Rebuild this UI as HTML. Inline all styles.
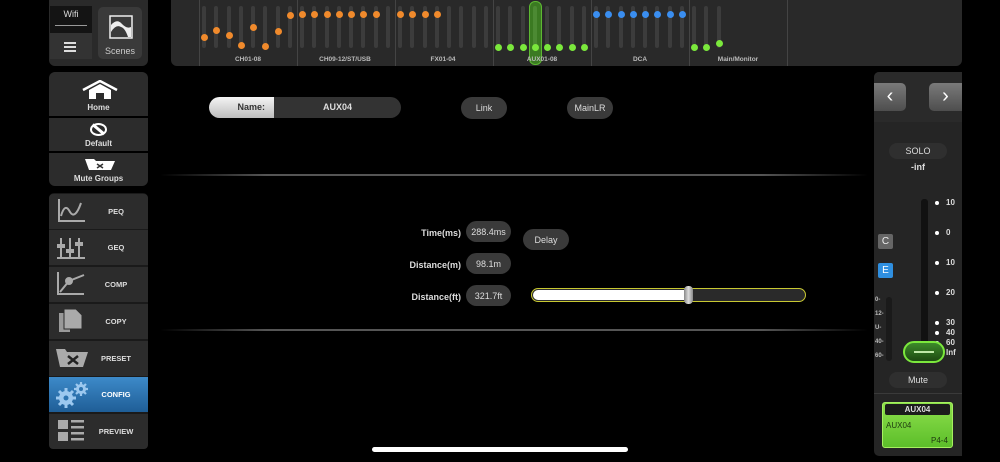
<!DOCTYPE html><html><head><style>
*{margin:0;padding:0;box-sizing:border-box}
body{width:1000px;height:462px;background:#000;position:relative;overflow:hidden;font-family:"Liberation Sans",sans-serif;color:#ddd}
.a{position:absolute}
.t{position:absolute;top:6px;width:4px;height:42px;background:#3c3c3c;border-radius:2px;margin-left:-2px}
.d{position:absolute;width:7px;height:7px;border-radius:50%;margin-left:-3.5px;margin-top:-3.5px}
.o{background:#f08a2c}.g{background:#7be83c}.b{background:#3a8ef0}
.sep{position:absolute;top:0;width:1px;height:66px;background:#444}
.lbl{position:absolute;top:56px;font-size:6.5px;font-weight:bold;color:#bbb;transform:translateX(-50%);white-space:nowrap}
.btn{position:absolute;left:49px;width:99px;background:#2c2c2c;color:#eee;font-weight:bold}
.mi{position:absolute;left:116px;font-size:7.5px;font-weight:bold;color:#ddd;transform:translateX(-50%)}
.pill{position:absolute;background:#3a3a3a;border-radius:12px;font-size:9px;color:#ddd;text-align:center}
.lab{position:absolute;font-size:9px;font-weight:bold;color:#ddd;text-align:right;width:80px}
.sc{position:absolute;left:935px;font-size:8px;font-weight:bold;color:#ddd}
.sc i{display:inline-block;width:4px;height:4px;background:#fff;border-radius:50%;margin-right:7px;vertical-align:middle}
.ml{position:absolute;left:875px;font-size:6px;font-weight:bold;color:#bbb}
</style></head><body>
<div class="a" style="left:171px;top:0;width:791px;height:66px;background:#292929;border-radius:0 0 6px 6px"></div>
<div class="sep" style="left:199px"></div><div class="sep" style="left:297px"></div><div class="sep" style="left:395px"></div><div class="sep" style="left:493px"></div><div class="sep" style="left:591px"></div><div class="sep" style="left:689px"></div><div class="sep" style="left:787px"></div>
<div class="a" style="left:529px;top:1px;width:13px;height:64px;border-radius:6px;background:#3b7a22;border:1px solid #5db832"></div>
<div class="t" style="left:204px"></div><div class="t" style="left:216px"></div><div class="t" style="left:229px"></div><div class="t" style="left:241px"></div><div class="t" style="left:253px"></div><div class="t" style="left:265px"></div><div class="t" style="left:278px"></div><div class="t" style="left:290px"></div>
<div class="t" style="left:302px"></div><div class="t" style="left:314px"></div><div class="t" style="left:327px"></div><div class="t" style="left:339px"></div><div class="t" style="left:351px"></div><div class="t" style="left:363px"></div><div class="t" style="left:376px"></div><div class="t" style="left:388px"></div>
<div class="t" style="left:400px"></div><div class="t" style="left:412px"></div><div class="t" style="left:425px"></div><div class="t" style="left:437px"></div><div class="t" style="left:449px"></div><div class="t" style="left:461px"></div><div class="t" style="left:474px"></div><div class="t" style="left:486px"></div>
<div class="t" style="left:498px"></div><div class="t" style="left:510px"></div><div class="t" style="left:523px"></div><div class="t" style="left:535px;background:#4c8a33"></div><div class="t" style="left:547px"></div><div class="t" style="left:559px"></div><div class="t" style="left:572px"></div><div class="t" style="left:584px"></div>
<div class="t" style="left:596px"></div><div class="t" style="left:608px"></div><div class="t" style="left:621px"></div><div class="t" style="left:633px"></div><div class="t" style="left:645px"></div><div class="t" style="left:657px"></div><div class="t" style="left:670px"></div><div class="t" style="left:682px"></div>
<div class="t" style="left:694px"></div><div class="t" style="left:706px"></div><div class="t" style="left:719px"></div>
<div class="d o" style="left:204px;top:37px"></div><div class="d o" style="left:216px;top:30px"></div><div class="d o" style="left:229px;top:35px"></div><div class="d o" style="left:241px;top:45px"></div><div class="d o" style="left:253px;top:27px"></div><div class="d o" style="left:265px;top:46px"></div><div class="d o" style="left:278px;top:31px"></div><div class="d o" style="left:290px;top:15px"></div>
<div class="d o" style="left:302px;top:14px"></div><div class="d o" style="left:314px;top:14px"></div><div class="d o" style="left:327px;top:14px"></div><div class="d o" style="left:339px;top:14px"></div><div class="d o" style="left:351px;top:14px"></div><div class="d o" style="left:363px;top:14px"></div><div class="d o" style="left:376px;top:14px"></div>
<div class="d o" style="left:400px;top:14px"></div><div class="d o" style="left:412px;top:14px"></div><div class="d o" style="left:425px;top:14px"></div><div class="d o" style="left:437px;top:14px"></div>
<div class="d g" style="left:498px;top:47px"></div><div class="d g" style="left:510px;top:47px"></div><div class="d g" style="left:523px;top:47px"></div><div class="d g" style="left:535px;top:47px"></div><div class="d g" style="left:547px;top:47px"></div><div class="d g" style="left:559px;top:47px"></div><div class="d g" style="left:572px;top:47px"></div><div class="d g" style="left:584px;top:47px"></div>
<div class="d b" style="left:596px;top:14px"></div><div class="d b" style="left:608px;top:14px"></div><div class="d b" style="left:621px;top:14px"></div><div class="d b" style="left:633px;top:14px"></div><div class="d b" style="left:645px;top:14px"></div><div class="d b" style="left:657px;top:14px"></div><div class="d b" style="left:670px;top:14px"></div><div class="d b" style="left:682px;top:14px"></div>
<div class="d g" style="left:694px;top:47px"></div><div class="d g" style="left:706px;top:47px"></div><div class="d g" style="left:719px;top:43px"></div>
<div class="lbl" style="left:248px">CH01-08</div><div class="lbl" style="left:345px">CH09-12/ST/USB</div><div class="lbl" style="left:443px">FX01-04</div><div class="lbl" style="left:542px">AUX01-08</div><div class="lbl" style="left:640px">DCA</div><div class="lbl" style="left:738px">Main/Monitor</div>

<div class="a" style="left:49px;top:0;width:99px;height:66px;background:#2a2a2a;border-radius:0 0 6px 6px"></div>
<div class="a" style="left:50px;top:6px;width:42px;height:27px;background:#141414"></div>
<div class="a" style="left:50px;top:9px;width:42px;text-align:center;font-size:9px;color:#ddd">Wifi</div>
<div class="a" style="left:55px;top:25px;width:32px;height:1px;background:#999"></div>
<div class="a" style="left:50px;top:33px;width:42px;height:26px;background:#333"></div>
<div class="a" style="left:64px;top:42px;width:12px;height:1.5px;background:#ddd;box-shadow:0 4px 0 #ddd,0 8px 0 #ddd"></div>
<div class="a" style="left:98px;top:7px;width:44px;height:52px;background:#3a3a3a;border-radius:5px"></div>
<svg class="a" style="left:109px;top:15px" width="24" height="24"><rect x="1" y="1" width="22" height="22" fill="none" stroke="#eee" stroke-width="1.5"/><path d="M2 10 Q8 3 13 9 Q18 14 22 12 L22 22 L19 22 Q16 13 12 12 Q7 9 2 17Z" fill="#eee"/></svg>
<div class="a" style="left:98px;top:46px;width:44px;text-align:center;font-size:9px;color:#ccc">Scenes</div>

<div class="btn" style="top:72px;height:44px;border-radius:6px 6px 0 0"></div>
<svg class="a" style="left:81px;top:80px" width="38" height="20"><path d="M2 10 L19 1 L36 10" fill="none" stroke="#fff" stroke-width="2.5"/><path d="M8 10 L19 4 L30 10 L30 19 L23 19 L23 13 L15 13 L15 19 L8 19Z" fill="#fff"/></svg>
<div class="a" style="left:49px;top:103px;width:99px;text-align:center;font-size:8px;font-weight:bold">Home</div>
<div class="btn" style="top:118px;height:33px"></div>
<div class="a" style="left:90px;top:123px;width:17px;height:13px;border:2.5px solid #fff;border-radius:50%"></div>
<div class="a" style="left:97px;top:122px;width:2.5px;height:15px;background:#fff;transform:rotate(-50deg)"></div>
<div class="a" style="left:49px;top:139px;width:99px;text-align:center;font-size:8px;font-weight:bold">Default</div>
<div class="btn" style="top:153px;height:33px;border-radius:0 0 6px 6px"></div>
<svg class="a" style="left:84px;top:158px" width="32" height="13"><path d="M1 1 L10 1 L12 3 L31 3 L27 12 L5 12Z" fill="#fff"/><path d="M13 6 L19 10 M19 6 L13 10" stroke="#333" stroke-width="1.5"/></svg>
<div class="a" style="left:49px;top:174px;width:99px;text-align:center;font-size:8px;font-weight:bold">Mute Groups</div>

<div class="a" style="left:49px;top:193px;width:99px;height:256px;background:#1a1a1a;border-radius:5px"></div>
<div class="btn" style="top:194px;height:35px;border-radius:4px 4px 0 0"></div>
<div class="btn" style="top:230px;height:35px"></div>
<div class="btn" style="top:267px;height:35px"></div>
<div class="btn" style="top:304px;height:35px"></div>
<div class="btn" style="top:341px;height:35px"></div>
<div class="btn" style="top:377px;height:35px;background:linear-gradient(#3d8ac9,#1f5e97)"></div>
<div class="btn" style="top:414px;height:35px;border-radius:0 0 4px 4px"></div>
<svg class="a" style="left:57px;top:198px" width="30" height="26" fill="none" stroke="#aaa" stroke-width="2"><path d="M2 1 V23 H28"/><path d="M4 18 Q8 4 13 14 Q18 22 24 5"/></svg>
<svg class="a" style="left:56px;top:236px" width="30" height="24" fill="#aaa"><rect x="4" y="2" width="2" height="20"/><rect x="13" y="2" width="2" height="20"/><rect x="22" y="2" width="2" height="20"/><rect x="1" y="8" width="8" height="4"/><rect x="10" y="13" width="8" height="4"/><rect x="19" y="6" width="8" height="4"/><rect x="1" y="21" width="28" height="2"/></svg>
<svg class="a" style="left:56px;top:271px" width="30" height="26" fill="none" stroke="#aaa" stroke-width="2"><path d="M2 1 V23 H28"/><path d="M4 21 L13 10 L28 4"/><circle cx="13" cy="10" r="3" fill="#aaa"/></svg>
<svg class="a" style="left:58px;top:308px" width="28" height="26" fill="#999"><path d="M1 5 H12 V24 H1Z"/><path d="M6 1 H18 L24 7 V21 H6Z" fill="#aaa" stroke="#2c2c2c"/></svg>
<svg class="a" style="left:55px;top:348px" width="34" height="20"><path d="M1 1 H10 L12 4 H33 L28 19 H5Z" fill="#aaa"/><path d="M13 8 L23 16 M23 8 L13 16" stroke="#222" stroke-width="2.5"/></svg>
<svg class="a" style="left:54px;top:381px" width="36" height="28" fill="#9cc8ef"><circle cx="12" cy="17" r="7"/><g stroke="#9cc8ef" stroke-width="3"><path d="M12 7 V27 M2 17 H22 M5 10 L19 24 M19 10 L5 24"/></g><circle cx="12" cy="17" r="2.5" fill="#2d74b0"/><circle cx="27" cy="8" r="5"/><g stroke="#9cc8ef" stroke-width="2.2"><path d="M27 1 V15 M20 8 H34 M22 3 L32 13 M32 3 L22 13"/></g><circle cx="27" cy="8" r="2" fill="#2d74b0"/></svg>
<svg class="a" style="left:57px;top:419px" width="28" height="24" fill="#aaa"><rect x="1" y="1" width="10" height="9"/><rect x="1" y="13" width="10" height="9"/><rect x="14" y="1" width="13" height="2.5"/><rect x="14" y="7" width="13" height="2.5"/><rect x="14" y="13" width="13" height="2.5"/><rect x="14" y="19" width="13" height="2.5"/></svg>
<div class="mi" style="top:207px">PEQ</div><div class="mi" style="top:243px">GEQ</div><div class="mi" style="top:280px">COMP</div><div class="mi" style="top:317px">COPY</div><div class="mi" style="top:354px">PRESET</div><div class="mi" style="top:390px;color:#fff">CONFIG</div><div class="mi" style="top:427px">PREVIEW</div>

<div class="a" style="left:209px;top:97px;width:65px;height:21px;background:linear-gradient(#f4f4f4,#bdbdbd);border-radius:11px 0 0 11px;font-size:9px;font-weight:bold;color:#333;text-align:right;padding:5px 9px 0 0">Name:</div>
<div class="a" style="left:274px;top:97px;width:127px;height:21px;background:#333;border-radius:0 11px 11px 0;font-size:9px;font-weight:bold;text-align:center;padding-top:5px">AUX04</div>
<div class="pill" style="left:461px;top:97px;width:46px;height:22px;padding-top:6px">Link</div>
<div class="pill" style="left:567px;top:97px;width:46px;height:22px;padding-top:6px">MainLR</div>
<div class="a" style="left:160px;top:174px;width:708px;height:2px;background:linear-gradient(90deg,#000,#555 15%,#555 85%,#000)"></div>
<div class="a" style="left:160px;top:329px;width:708px;height:2px;background:linear-gradient(90deg,#000,#555 15%,#555 85%,#000)"></div>
<div class="lab" style="left:381px;top:228px">Time(ms)</div>
<div class="lab" style="left:381px;top:260px">Distance(m)</div>
<div class="lab" style="left:381px;top:292px">Distance(ft)</div>
<div class="pill" style="left:466px;top:221px;width:45px;height:21px;padding-top:6px">288.4ms</div>
<div class="pill" style="left:466px;top:253px;width:45px;height:21px;padding-top:6px">98.1m</div>
<div class="pill" style="left:466px;top:285px;width:45px;height:21px;padding-top:6px">321.7ft</div>
<div class="pill" style="left:523px;top:229px;width:46px;height:21px;padding-top:6px">Delay</div>
<div class="a" style="left:531px;top:288px;width:275px;height:14px;border:1.5px solid #c8c832;border-radius:7px;background:#2a2a2a"></div>
<div class="a" style="left:533px;top:290px;width:156px;height:10px;border-radius:5px 0 0 5px;background:#fff"></div>
<div class="a" style="left:684px;top:286px;width:9px;height:18px;border-radius:4px;background:linear-gradient(90deg,#888,#ddd,#888)"></div>

<div class="a" style="left:874px;top:72px;width:88px;height:384px;background:#252525;border-radius:5px 0 0 5px"></div>
<div class="a" style="left:874px;top:72px;width:88px;height:50px;background:#2a2a2a;border-radius:5px 0 0 0"></div>
<div class="a" style="left:874px;top:83px;width:32px;height:28px;background:linear-gradient(#7a7a7a,#4e4e4e);border-radius:0 5px 5px 0;color:#fff;font-size:20px;text-align:center;line-height:26px">&#8249;</div>
<div class="a" style="left:929px;top:83px;width:33px;height:28px;background:linear-gradient(#7a7a7a,#4e4e4e);border-radius:5px 0 0 5px;color:#fff;font-size:20px;text-align:center;line-height:26px">&#8250;</div>
<div class="a" style="left:889px;top:143px;width:58px;height:16px;background:#2f2f2f;border-radius:8px;font-size:9px;text-align:center;padding-top:3px">SOLO</div>
<div class="a" style="left:889px;top:162px;width:58px;font-size:9px;font-weight:bold;text-align:center">-inf</div>
<div class="a" style="left:878px;top:234px;width:15px;height:15px;background:#666;border-radius:2px;color:#eee;font-size:10px;text-align:center;line-height:15px">C</div>
<div class="a" style="left:878px;top:263px;width:15px;height:15px;background:#2f8fe0;border-radius:2px;color:#fff;font-size:10px;text-align:center;line-height:15px">E</div>
<div class="a" style="left:886px;top:297px;width:6px;height:64px;background:#1a1a1a;border-radius:3px"></div>
<div class="ml" style="top:297px">0-</div><div class="ml" style="top:311px">12-</div><div class="ml" style="top:325px">U-</div><div class="ml" style="top:339px">40-</div><div class="ml" style="top:353px">60-</div>
<div class="a" style="left:921px;top:199px;width:7px;height:155px;background:#111;border-radius:3px"></div>
<div class="sc" style="top:198px"><i></i>10</div><div class="sc" style="top:228px"><i></i>0</div><div class="sc" style="top:258px"><i></i>10</div><div class="sc" style="top:288px"><i></i>20</div><div class="sc" style="top:318px"><i></i>30</div><div class="sc" style="top:328px"><i></i>40</div><div class="sc" style="top:338px"><i></i>60</div><div class="sc" style="top:348px"><i></i>Inf</div>
<div class="a" style="left:903px;top:341px;width:42px;height:22px;border-radius:11px;background:linear-gradient(#3d8a2a,#1d4a12);border:2px solid #7be83c"></div>
<div class="a" style="left:914px;top:351px;width:20px;height:1.5px;background:#bfe8a8"></div>
<div class="a" style="left:889px;top:372px;width:58px;height:16px;background:#2f2f2f;border-radius:8px;font-size:9px;text-align:center;padding-top:3px">Mute</div>
<div class="a" style="left:874px;top:393px;width:88px;height:1px;background:#3a3a3a"></div>
<div class="a" style="left:882px;top:402px;width:71px;height:46px;background:linear-gradient(#8ee04c,#5cbe2a);border:1.5px solid #a6f060;border-radius:3px"></div>
<div class="a" style="left:885px;top:404px;width:65px;height:11px;background:#1c1c1c;border-radius:2px;font-size:8px;font-weight:bold;text-align:center;line-height:11px">AUX04</div>
<div class="a" style="left:886px;top:421px;font-size:8px;color:#1f3a10">AUX04</div>
<div class="a" style="left:931px;top:436px;font-size:8px;color:#1f3a10">P4-4</div>

<div class="a" style="left:372px;top:447px;width:256px;height:5px;background:#fff;border-radius:3px"></div>
</body></html>
